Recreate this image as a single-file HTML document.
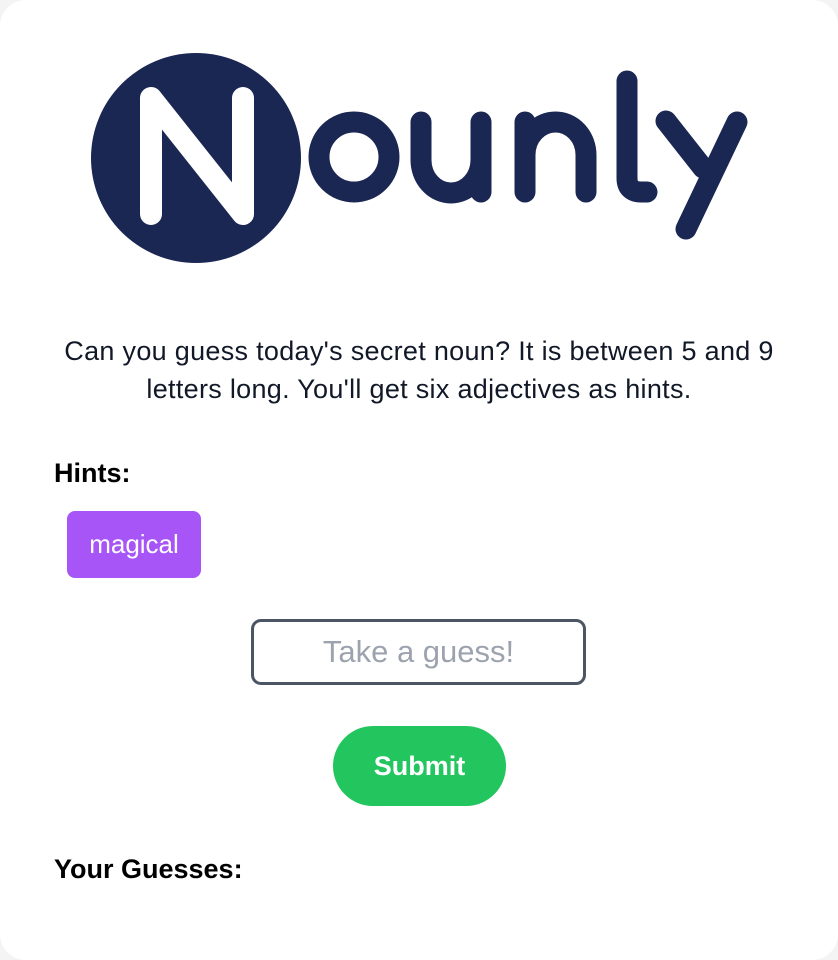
<!DOCTYPE html>
<html><head><meta charset="utf-8"><style>
html,body{margin:0;padding:0;background:#f4f4f5;}
body{width:838px;height:960px;overflow:hidden;font-family:"Liberation Sans",Arial,sans-serif;}
.card{position:absolute;left:0;top:0;width:838px;height:960px;background:#fff;border-radius:26px;}
.p{position:absolute;left:0;width:838px;text-align:center;font-size:27px;letter-spacing:0.3px;color:#111827;white-space:nowrap;}
.h{position:absolute;left:54px;font-size:27px;font-weight:bold;color:#000;}
.tag{position:absolute;left:67px;top:511px;width:134px;height:67px;background:#a855f7;border-radius:8px;color:#fff;font-size:26px;line-height:67px;text-align:center;}
.inp{position:absolute;left:251px;top:619px;width:329px;height:60px;border:3px solid #4b5563;border-radius:10px;color:#9ca3af;font-size:31px;line-height:60px;text-align:center;}
.btn{position:absolute;left:333px;top:726px;width:173px;height:80px;background:#22c55e;border-radius:40px;color:#fff;font-size:27px;font-weight:bold;line-height:80px;text-align:center;}
</style></head><body><div class="card">
<svg style="position:absolute;left:0;top:0" width="838" height="300">
<ellipse cx="196" cy="158" rx="105" ry="105" fill="#1b2753"/>
<g fill="none" stroke="#fff" stroke-width="22" stroke-linecap="round" stroke-linejoin="round">
<path d="M151 214 V98 L243 214 V98"/>
</g>
<g fill="none" stroke="#1b2753" stroke-width="21" stroke-linecap="round" stroke-linejoin="round">
<ellipse cx="354" cy="157" rx="35" ry="35"/>
<path d="M421 122 V160 a30 33 0 0 0 60 0 V122 M481 160 V192"/>
<path d="M525 192 V122 M525 155 a30.5 33 0 0 1 61 0 V192"/>
<path d="M627 81 V178 q0 14 14 14 h6"/>
<path d="M666 121 L703 168 M737 122 L686 229"/>
</g>
</svg>
<div class="p" style="top:336px">Can you guess today's secret noun? It is between 5 and 9</div>
<div class="p" style="top:374px">letters long. You'll get six adjectives as hints.</div>
<div class="h" style="top:458px">Hints:</div>
<div class="tag">magical</div>
<div class="inp">Take a guess!</div>
<div class="btn">Submit</div>
<div class="h" style="top:854px">Your Guesses:</div>
</div></body></html>
